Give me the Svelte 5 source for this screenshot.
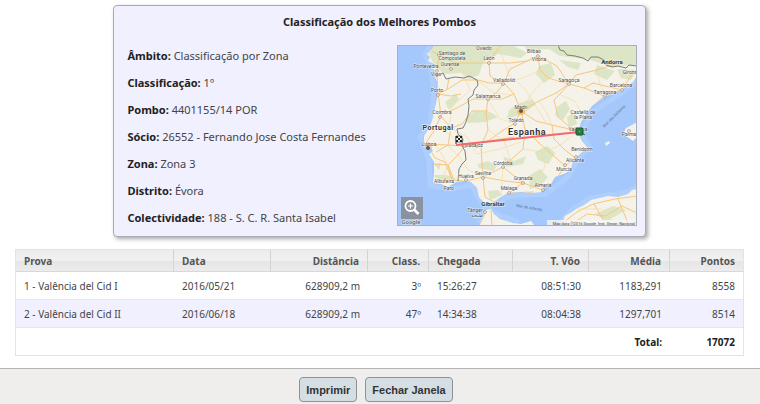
<script lang="ts">
	interface Race {
		name: string;
		date: string;
		distance: string;
		place: string;
		arrival: string;
		flight: string;
		average: string;
		points: number;
	}

	const details = [
		['Âmbito', 'Classificação por Zona'],
		['Classificação', '1º'],
		['Pombo', '4401155/14 POR'],
		['Sócio', '26552 - Fernando Jose Costa Fernandes'],
		['Zona', 'Zona 3'],
		['Distrito', 'Évora'],
		['Colectividade', '188 - S. C. R. Santa Isabel']
	];

	const races: Race[] = [
		{
			name: '1 - Valência del Cid I',
			date: '2016/05/21',
			distance: '628909,2 m',
			place: '3º',
			arrival: '15:26:27',
			flight: '08:51:30',
			average: '1183,291',
			points: 8558
		},
		{
			name: '2 - Valência del Cid II',
			date: '2016/06/18',
			distance: '628909,2 m',
			place: '47º',
			arrival: '14:34:38',
			flight: '08:04:38',
			average: '1297,701',
			points: 8514
		}
	];

	let total = $derived(races.reduce((sum, r) => sum + r.points, 0));

	const cities = [
		{ name: 'Santiago de', x: 55, y: 10 },
		{ name: 'Compostela', x: 55, y: 15 },
		{ name: 'Pontevedra', x: 29, y: 23 },
		{ name: 'Ourense', x: 53, y: 21 },
		{ name: 'Vigo', x: 39, y: 31 },
		{ name: 'Oviedo', x: 87, y: 5 },
		{ name: 'León', x: 92, y: 15 },
		{ name: 'Valladolid', x: 107, y: 37 },
		{ name: 'Porto', x: 40, y: 47 },
		{ name: 'Salamanca', x: 91, y: 53 },
		{ name: 'Coimbra', x: 45, y: 69 },
		{ name: 'Bilbao', x: 137, y: 8 },
		{ name: 'Vitoria', x: 142, y: 16 },
		{ name: 'Saragoça', x: 172, y: 37 },
		{ name: 'Girona', x: 233, y: 29 },
		{ name: 'Barcelona', x: 224, y: 42 },
		{ name: 'Tarragona', x: 208, y: 49 },
		{ name: 'Madri', x: 124, y: 64 },
		{ name: 'Toledo', x: 119, y: 77 },
		{ name: 'Castelló de', x: 186, y: 69 },
		{ name: 'la Plana', x: 186, y: 74 },
		{ name: 'Valência', x: 181, y: 86 },
		{ name: 'Palma', x: 232, y: 91 },
		{ name: 'Lisboa', x: 32, y: 101 },
		{ name: 'Badajoz', x: 77, y: 102 },
		{ name: 'Córdoba', x: 106, y: 120 },
		{ name: 'Sevilha', x: 86, y: 130 },
		{ name: 'Huelva', x: 69, y: 133 },
		{ name: 'Albufeira', x: 47, y: 138 },
		{ name: 'Faro', x: 52, y: 145 },
		{ name: 'Málaga', x: 112, y: 145 },
		{ name: 'Granada', x: 126, y: 135 },
		{ name: 'Almería', x: 146, y: 142 },
		{ name: 'Murcia', x: 167, y: 126 },
		{ name: 'Alicante', x: 178, y: 117 },
		{ name: 'Benidorm', x: 185, y: 106 },
		{ name: 'Tânger', x: 78, y: 167 },
		{ name: 'طنجة', x: 80, y: 172 }
	];

	const towns = [
		[42, 10], [40, 26], [54, 24], [92, 18], [106, 39], [41, 50], [91, 54], [43, 72],
		[141, 11], [172, 39], [225, 45], [208, 51], [118, 79], [232, 86], [68, 101],
		[106, 122], [86, 133], [69, 135], [112, 148], [126, 138], [146, 145], [168, 120],
		[179, 112], [88, 167]
	];
</script>

<div class="page">
	<main>
		<section class="card">
			<h1>Classificação dos Melhores Pombos</h1>
			<div class="card-body">
				<dl class="details">
					{#each details as [label, value]}
						<div>
							<dt>{label}:</dt>
							<dd>{value}</dd>
						</div>
					{/each}
				</dl>

				<div class="map">
					<svg viewBox="0 0 240 181" role="img" aria-label="Mapa da Península Ibérica">
						<defs>
							<clipPath id="land">
								<path
									d="M37 0L35 4L30 9L33 12L31 16L37 19L34 23L38 25L37 29L40 37L41 48L39 58L37 67L35 76L32 83L27 91L27 100L33 102L36 106L32 109L37 117L37 127L36 138L44 139L51 142L59 137L66 136L74 137L80 143L82 152L89 160L97 157L104 152L111 148L124 147L137 148L144 147L147 142L154 139L158 132L169 128L174 124L176 115L183 109L190 102L185 96L181 88L184 77L190 68L195 61L207 52L216 48L224 45L236 37L240 31V0Z"
								/>
								<path
									d="M82 181L86 172L89 165L94 164L97 169L103 174L116 178L124 179L134 176L138 181ZM164 181L168 171L175 167L179 164L187 160L194 155L211 151L221 152L231 149L235 145L240 144V181Z"
								/>
							</clipPath>
						</defs>

						<rect width="240" height="181" fill="#a5c8fc" />
						<path
							class="shallow"
							d="M33 0L28 10L34 23L37 48L33 78L23 92L32 115L33 141L55 144L74 140L88 163L113 151L149 149L173 130L180 114L193 102L184 88L195 67L222 50L240 36M82 178L89 163L104 171L122 177M161 180L176 164L193 153L231 147L240 142"
						/>

						<g clip-path="url(#land)">
							<rect width="240" height="181" fill="#f5f2e9" />
							<g class="green">
								<path d="M28 0H115L130 8L124 13L101 9L86 18L82 30L71 34L65 28L47 29L37 20Z" />
								<path d="M130 5L152 4L163 11L190 14L213 21L240 20V0H127Z" opacity=".7" />
								<path d="M142 21L154 18L158 30L147 38L139 29ZM112 65L123 58L135 54L139 59L126 69L110 74Z" />
								<path d="M200 20L218 26L210 35L197 29ZM220 24L240 25L234 35L224 33Z" />
								<path d="M48 57L59 49L62 54L52 65ZM69 73L78 66L93 67L101 72L88 77L71 78Z" />
								<path d="M160 62L169 56L173 64L166 75L158 70ZM170 72L177 67L180 79L172 83Z" />
								<path d="M81 119L91 116L100 121L96 126L82 123ZM106 111L117 116L129 111L126 119L110 122Z" />
								<path d="M132 131L143 124L151 132L143 141L133 144ZM138 107L150 101L158 108L151 119L141 115Z" />
								<path d="M91 146L101 145L105 150L93 155ZM36 130L50 130L59 134L42 136ZM37 119L44 118L42 125Z" />
								<path d="M162 15L184 18L181 25L171 22ZM198 169L216 161L229 165L210 176Z" />
							</g>

							<g class="road">
								<path d="M35 6L42 10L40 29L41 49L44 70L38 84L29 98L38 113L48 117L55 135M44 70L60 63L76 54L91 54L101 46L107 38L113 24L141 11" />
								<path d="M41 49L51 44L65 35L81 35L92 38L107 38L117 49L124 66L142 56L159 48L172 39L187 43L207 51L224 45" />
								<path d="M42 10L58 18L74 18L92 18L98 8L104 0M92 18L93 31L105 39M92 18L113 18L130 16L141 11L160 21L172 39" />
								<path d="M141 11L143 25L151 33L172 39L179 30L200 25L221 18M187 43L196 38L225 45L233 32L240 25" />
								<path d="M124 66L118 78L105 86L91 96L68 101L50 100L29 99M124 66L128 84L126 104L117 112L106 122L86 132L69 136" />
								<path d="M124 66L139 76L155 80L181 86L194 63L207 51M155 80L157 94L168 105L178 113L168 121L157 137L146 145" />
								<path d="M128 84L143 99L157 111L168 121M106 122L126 138L146 145M86 132L108 136L126 138M86 132L88 152L97 157L112 148L126 138" />
								<path d="M91 54L89 68L91 85L84 101L85 119L86 132M55 135L51 120L60 111L68 101M37 119L51 120L57 135L73 137" />
								<path d="M172 39L163 49L157 55L161 72L173 82M117 49L105 54L91 54M112 148L137 147M117 92L91 96" />
								<path d="M41 49L54 51L64 49M43 70L54 83L65 79L75 66L91 66M54 83L51 100L39 107M50 44L52 33" />
								<path d="M94 165L95 181M89 167L82 181M164 179L180 167L196 159L218 154L240 151M172 181L190 169L208 171L225 161L240 168M197 159L207 176M221 154L231 178" />
							</g>
							<g class="minor">
								<path d="M42 18L65 26L73 45L55 62L52 82L70 92L80 109L103 104L124 97M58 0L64 16L76 32L97 48L115 50M101 0L112 30L128 44L138 60L150 79M143 25L126 33L107 37" />
								<path d="M159 48L178 56L185 70M200 25L203 39L208 51M149 33L136 47L124 65M142 56L150 68L155 81M119 79L103 74L91 54M91 85L107 96L113 113L106 122L104 150" />
								<path d="M51 101L62 111L71 125L86 132M126 104L145 107L162 101L181 86M145 107L148 122L137 137M43 83L61 96M36 95L51 120L44 137M181 164L204 164L218 178" />
							</g>
							<circle cx="31" cy="103" r="4" fill="#f6b452" opacity=".7" />
							<circle cx="124" cy="66" r="4" fill="#f6b452" opacity=".7" />
						</g>

						<path class="island" d="M226 89L229 83L235 80L240 77V92L236 96ZM208 98L212 96L213 98L209 101Z" />
						<path
							class="border"
							d="M38 29L42 30L46 28L49 34L58 32L67 33L72 31L80 35L81 40L77 45L76 50L71 54L72 61L71 70L69 77L66 83L60 84L61 89L66 94L65 101L68 106L69 115L65 119L62 124L61 136M161 0L163 5L167 6L170 10L178 11L186 13L191 16L194 12L201 12L207 15L209 20L215 22L221 21L229 23L232 20L240 21"
						/>

						<g class="towns">
							{#each towns as [x, y]}
								<circle cx={x} cy={y} r="1.4" />
							{/each}
						</g>

						<g class="cities">
							{#each cities as city}
								<text x={city.x} y={city.y}>{city.name}</text>
							{/each}
							<text class="region" x="215" y="19">Andorra</text>
							<text class="region" x="96" y="161">Gibraltar</text>
						</g>
						<text class="sea" x="218" y="72" transform="rotate(-45 218 72)">Mar das Baleares</text>
						<text class="sea" x="132" y="164" transform="rotate(10 132 164)">Mar de Alborão</text>
						<text class="country" x="41" y="85">Portugal</text>
						<text class="country large" x="130" y="90">Espanha</text>

						<circle cx="124" cy="66" r="2" fill="#6d5338" />
						<circle cx="31" cy="103" r="2" fill="#6d5338" />

						<path class="route" d="M59 100L182 87" />

						<!-- loft flag -->
						<path d="M59 99V91" stroke="#333" />
						<path d="M59 91H65V97H59Z" fill="#eee" stroke="#444" stroke-width=".6" />
						<path d="M59 91H61V93H59ZM63 91H65V93H63ZM61 93H63V95H61ZM59 95H61V97H59ZM63 95H65V97H63Z" fill="#222" />

						<!-- release point -->
						<rect x="179" y="83" width="7" height="7" rx="1" fill="#2e8a45" stroke="#175027" />
						<path d="M181 85H184V88H181ZM185 88L188 90" fill="#48bd5c" stroke="#174a28" stroke-width=".7" />

						<rect x="150" y="175" width="90" height="6" fill="#f5f5f5" opacity=".8" />
						<text class="credit" x="238" y="180">Map data ©2016 Google, Inst. Geogr. Nacional</text>
						<text class="google" x="14" y="179">Google</text>
					</svg>
					<button class="zoom" type="button" aria-label="Ampliar mapa">
						<svg viewBox="0 0 22 22" fill="none" stroke="#fff">
							<circle cx="9.5" cy="9" r="5" stroke-width="1.8" />
							<path d="M9.500 6.500V11.500M7 9H12" stroke-width="1.2" />
							<path d="M13.500 13L17.500 17" stroke-width="2.6" />
						</svg>
					</button>
				</div>
			</div>
		</section>

		<table>
			<thead>
				<tr>
					<th class="c-name">Prova</th>
					<th class="c-date">Data</th>
					<th class="c-distance num">Distância</th>
					<th class="c-place num">Class.</th>
					<th class="c-arrival">Chegada</th>
					<th class="c-flight num">T. Vôo</th>
					<th class="c-average num">Média</th>
					<th class="c-points num">Pontos</th>
				</tr>
			</thead>
			<tbody>
				{#each races as race}
					<tr>
						<td>{race.name}</td>
						<td>{race.date}</td>
						<td class="num">{race.distance}</td>
						<td class="num">{race.place}</td>
						<td>{race.arrival}</td>
						<td class="num">{race.flight}</td>
						<td class="num">{race.average}</td>
						<td class="num">{race.points}</td>
					</tr>
				{/each}
			</tbody>
			<tfoot>
				<tr>
					<td class="num" colspan="7">Total:</td>
					<td class="num">{total}</td>
				</tr>
			</tfoot>
		</table>
	</main>

	<footer>
		<button type="button" onclick={() => window.print()}>Imprimir</button>
		<button type="button" onclick={() => window.close()}>Fechar Janela</button>
	</footer>
</div>

<style>
	:global(body) {
		margin: 0;
		background: #fff;
	}

	.page {
		min-height: 100vh;
		display: flex;
		flex-direction: column;
		font-family: 'Noto Sans', 'Open Sans', sans-serif;
		font-size: 11px;
		color: #444;
	}

	main {
		padding: 5px 16px 12px 15px;
	}

	/* ── Summary card ── */
	.card {
		box-sizing: border-box;
		width: 73%;
		min-width: 510px;
		margin: 0 auto 12px;
		padding: 7px 0 5px;
		background: #f0f0ff;
		border: 1px solid #aaaab4;
		border-radius: 4px;
		box-shadow: 2px 2px 4px rgba(0, 0, 0, 0.35);
	}

	h1 {
		margin: 0 0 11px;
		font-size: 11px;
		line-height: 18px;
		font-weight: 700;
		text-align: center;
		color: #222;
	}

	.card-body {
		display: flex;
		align-items: flex-start;
		justify-content: space-between;
		gap: 12px;
		padding: 0 8px 0 13px;
	}

	.details {
		margin: 0;
		line-height: 27px;
		white-space: nowrap;
	}

	dt,
	dd {
		display: inline;
		margin: 0;
	}

	dt {
		font-weight: 700;
		color: #222;
	}

	/* ── Map ── */
	.map {
		position: relative;
		flex: 0 0 240px;
		margin-top: 3px;
		outline: 1px solid #aab0bb;
		outline-offset: -1px;
	}

	.map svg {
		display: block;
		width: 100%;
	}

	.shallow {
		fill: none;
		stroke: #b4d4ff;
		stroke-width: 5;
		opacity: 0.6;
	}

	.green path {
		fill: #cbdcae;
		opacity: 0.6;
	}

	.road path {
		fill: none;
		stroke: #f7c67c;
		stroke-width: 1;
		stroke-linejoin: round;
	}

	.minor path {
		fill: none;
		stroke: #f7d99b;
		stroke-width: 0.6;
	}

	.island {
		fill: #f5f2e9;
	}

	.border {
		fill: none;
		stroke: #7c7e7b;
		stroke-width: 1;
	}

	.towns circle {
		fill: #fff;
		stroke: #886c50;
		stroke-width: 0.6;
	}

	.cities text {
		font-family: Roboto, sans-serif;
		font-size: 5px;
		text-anchor: middle;
		fill: #4b4b4b;
		stroke: #fff;
		stroke-width: 1px;
		stroke-opacity: 0.6;
		paint-order: stroke;
	}

	.cities .region {
		font-size: 6px;
		font-weight: 700;
		fill: #333;
	}

	.country {
		font-family: Roboto, sans-serif;
		font-size: 7px;
		font-weight: 700;
		letter-spacing: 0.5px;
		text-anchor: middle;
		fill: #333;
		stroke: #fff;
		stroke-width: 1px;
		paint-order: stroke;
	}

	.country.large {
		font-size: 9px;
	}

	.sea {
		font-family: Roboto, sans-serif;
		font-size: 4px;
		font-style: italic;
		text-anchor: middle;
		fill: #52749e;
	}

	.route {
		stroke: #f56868;
		stroke-width: 2;
	}

	.credit {
		font-family: Roboto, sans-serif;
		font-size: 4px;
		text-anchor: end;
		fill: #444;
	}

	.google {
		font-family: Roboto, sans-serif;
		font-size: 6px;
		font-weight: 700;
		text-anchor: middle;
		fill: #777;
		stroke: #eee;
		stroke-width: 1px;
		paint-order: stroke;
	}

	.zoom {
		position: absolute;
		left: 4px;
		bottom: 7px;
		width: 22px;
		height: 22px;
		padding: 0;
		border: 0;
		background: #8b929f;
	}

	/* ── Races ── */
	table {
		width: 100%;
		table-layout: fixed;
		border-collapse: separate;
		border-spacing: 0;
		border: 1px solid #e3e3e3;
		border-top: 0;
		font-size: 10px;
	}

	th,
	td {
		padding: 0 8px;
		text-align: left;
		white-space: nowrap;
	}

	th {
		height: 23px;
		line-height: 14px;
		box-sizing: border-box;
		color: #555;
		background: linear-gradient(#ececec, #f1f1f1 50%, #e5e5e5 51%, #ececec);
		border-top: 1px solid #e3e3e3;
		border-bottom: 1px solid #d8d8d8;
		border-right: 1px solid #d4d4d4;
	}

	th:last-child {
		border-right: 0;
	}

	td {
		height: 27px;
		line-height: 14px;
		border-bottom: 1px solid #e6e6ec;
	}

	tbody tr:nth-child(even) {
		background: #f0f0ff;
	}

	tfoot td {
		height: 27px;
		border-bottom: 0;
		font-weight: 700;
		color: #222;
	}

	.num {
		text-align: right;
	}

	/* shares of the table's width, scaled with it */
	.c-name {
		width: 158px;
	}

	.c-date,
	.c-distance {
		width: 97px;
	}

	.c-place {
		width: 61px;
	}

	.c-arrival {
		width: 84px;
	}

	.c-flight {
		width: 76px;
	}

	.c-average {
		width: 81px;
	}

	.c-points {
		width: 73px;
	}

	/* ── Actions ── */
	footer {
		flex: 1;
		display: flex;
		align-items: flex-start;
		justify-content: center;
		gap: 8px;
		padding: 8px 8px 2px 0;
		background: #f0eded;
		border-top: 1px solid #b5b5b5;
	}

	footer button {
		height: 25px;
		padding: 0 6px;
		font-family: 'Liberation Sans', Arial, sans-serif;
		font-size: 11px;
		font-weight: 700;
		color: #333;
		background: #d5dee3;
		border: 1px solid #8c9296;
		border-radius: 4px;
	}
</style>
